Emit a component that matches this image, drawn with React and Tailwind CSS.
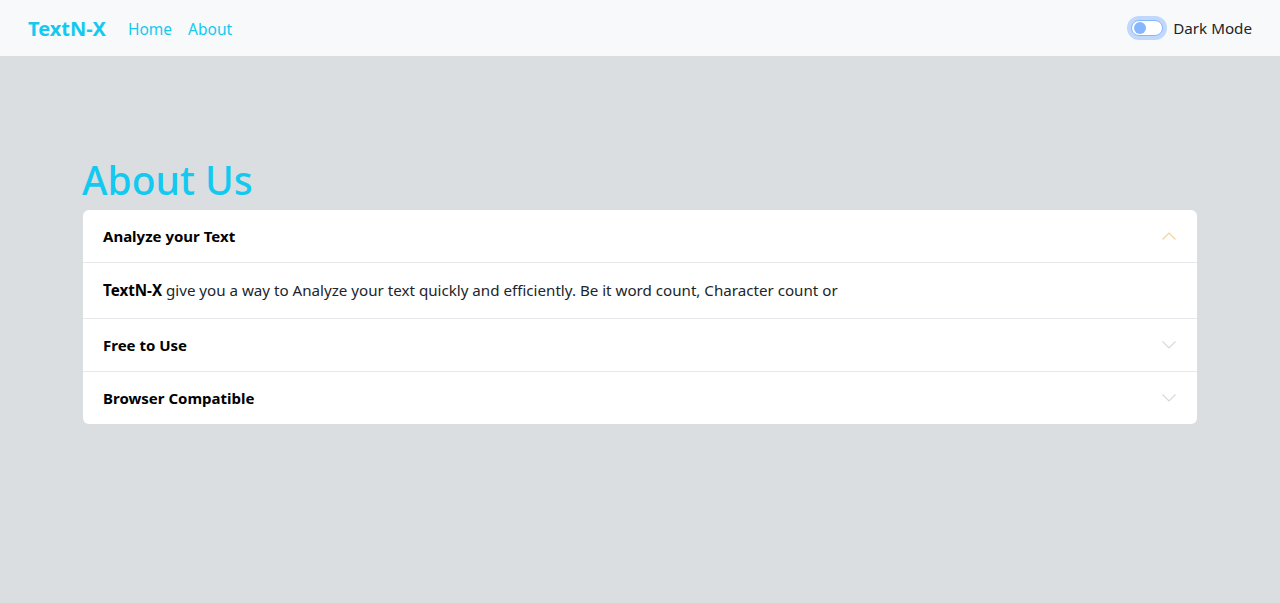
import React, { useState } from "react";

function Chevron({ up, color }) {
  return (
    <svg width="16" height="16" viewBox="0 0 16 16" fill="none" className={up ? "rotate-180" : ""}>
      <path d="M1.5 4.5 8 11l6.5-6.5" stroke={color} strokeWidth="1.2" />
    </svg>
  );
}

const ITEMS = [
  {
    title: "Analyze your Text",
    body: (
      <>
        <strong className="text-black">TextN-X</strong> give you a way to Analyze your text quickly and efficiently. Be it word count, Character count or
      </>
    ),
  },
  { title: "Free to Use", body: "TextN-X is a free character counter tool that provides instant character count & word count statistics for a given text." },
  { title: "Browser Compatible", body: "This word counter software works in any web browsers such as Chrome, Firefox, Internet Explorer, Safari, Opera." },
];

export default function App() {
  const [open, setOpen] = useState(0);
  const [dark, setDark] = useState(false);

  return (
    <div className="min-h-screen bg-[#dadee1] text-[#212529]" style={{ fontFamily: '"Noto Sans", sans-serif' }}>
      <nav className="h-14 bg-[#f8f9fa] flex items-center px-7">
        <a className="text-[20px] font-bold text-[#13c9ef] mr-[22px] pt-[2px]">TextN-X</a>
        <a className="text-[15.5px] text-[#13c9ef] mr-4 pt-[3px]">Home</a>
        <a className="text-[15.5px] text-[#13c9ef] pt-[3px]">About</a>
        <div className="ml-auto flex items-center gap-[7px]">
          <button
            onClick={() => setDark(!dark)}
            className="w-8 h-4 rounded-full border border-[#86b7fe] bg-white ring-4 ring-[#c1d8fd] flex items-center px-[2px]"
          >
            <span className="w-3 h-3 rounded-full bg-[#86b7fe]" />
          </button>
          <span className="text-[15.2px] text-[#212529] ml-[3px]">Dark Mode</span>
        </div>
      </nav>

      <div className="px-[83px] pt-[101px]">
        <h1 className="text-[39px] font-medium text-[#13c9ef] leading-[1.2] mb-[6px] -ml-[1px]">About Us</h1>
        <div className="bg-white rounded-[6px] overflow-hidden">
          {ITEMS.map((item, i) => (
            <div key={i} className={i > 0 ? "border-t border-[#e6e8eb]" : ""}>
              <button
                onClick={() => setOpen(open === i ? -1 : i)}
                className="w-full h-[52px] flex items-center justify-between px-5 text-left"
              >
                <span className="text-[15px] font-bold text-black">{item.title}</span>
                <Chevron up={open === i} color={open === i ? "#f9cf99" : "#d9d9d9"} />
              </button>
              {open === i && (
                <div className="border-t border-[#e6e8eb] h-[56px] px-5 flex items-center text-[15.15px] text-[#212529]">
                  <p>{item.body}</p>
                </div>
              )}
            </div>
          ))}
        </div>
      </div>
    </div>
  );
}
